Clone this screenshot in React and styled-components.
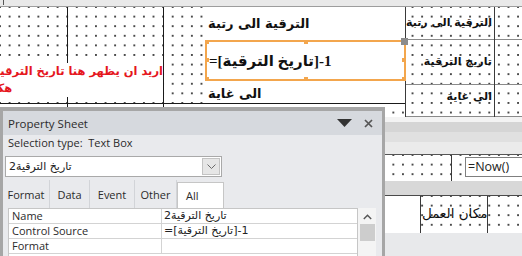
import React from "react";
import styled, { createGlobalStyle } from "styled-components";

const GlobalStyle = createGlobalStyle`
  html, body { margin: 0; padding: 0; }
  body {
    background: #ffffff;
    font-family: "Open Sans", "DejaVu Sans", sans-serif;
    overflow: hidden;
  }
`;

const dotGrid = `
  background-color: #ffffff;
  background-image: radial-gradient(circle, #4a4a4a 0.75px, transparent 1.05px);
  background-size: 9.6px 9.6px;
  background-position: -4.8px -4.8px;
`;

const Screen = styled.div`
  position: relative;
  width: 522px;
  height: 256px;
  overflow: hidden;
  display: flex;
  flex-direction: column;
  background: #e8e9eb;
`;

const Ruler = styled.div`
  flex: 0 0 7px;
  box-sizing: border-box;
  background: #e9e9e9;
  border-bottom: 1px solid #9d9d9d;
  padding-left: 3px;

  &::before {
    content: "";
    display: block;
    width: 1px;
    height: 5px;
    background: #555;
  }
`;

const Detail = styled.div`
  flex: 0 0 110px;
  display: flex;
  ${dotGrid}
`;

const Column = styled.div`
  position: relative;
  flex: ${(p) => (p.$w ? `0 0 ${p.$w}px` : "1 1 auto")};
  box-sizing: border-box;
  display: flex;
  flex-direction: column;
  border-left: ${(p) => (p.$lead ? "1px solid #3a3a3a" : "none")};
  border-right: ${(p) => (p.$edge ? `1px solid ${p.$edge}` : "none")};
`;

const LeftCell = styled.div`
  position: relative;
  height: 97px;
  box-sizing: border-box;
  border-bottom: 1px solid #1a1a1a;
`;

const Note = styled.div`
  position: relative;
  z-index: 2;
  margin: 56px 0 0 -81px;
  width: 176px;
  background: #ffffff;
  color: #e5161d;
  font: bold 11.5px/17px "DejaVu Sans", sans-serif;
  direction: rtl;
`;

const NoteLine = styled.div`
  white-space: nowrap;
  text-align: ${(p) => (p.$tail ? "left" : "right")};
`;

const FieldLabel = styled.div`
  height: ${(p) => p.$h}px;
  box-sizing: border-box;
  background: #ffffff;
  padding: ${(p) => (p.$low ? "5px" : "0")} 0 0 3px;
  display: flex;
  align-items: ${(p) => (p.$low ? "flex-start" : "center")};
  border-bottom: ${(p) => (p.$low ? "1px solid #1a1a1a" : "none")};
  font: bold 13px/16px "DejaVu Sans", sans-serif;
  color: #111;
`;

const TextBox = styled.div`
  position: relative;
  z-index: 3;
  height: 41px;
  margin-right: -1px;
  box-sizing: border-box;
  border: 2px solid #f3a64d;
  background: #ffffff;
  display: flex;
  align-items: center;
  padding-left: 2px;
`;

const BoxText = styled.span`
  font: bold 15px/20px "Liberation Serif", "DejaVu Sans", serif;
  color: #111;
  white-space: nowrap;
`;

const Grip = styled.span`
  position: absolute;
  left: ${(p) => p.$x}px;
  top: ${(p) => p.$y}px;
  width: 4px;
  height: 4px;
  background: #f3a64d;
`;

const MoveHandle = styled.span`
  position: absolute;
  top: -4px;
  right: ${(p) => p.$r}px;
  width: 7px;
  height: 7px;
  background: #8c8c8c;
  z-index: 4;
`;

const SideLabel = styled.div`
  position: relative;
  height: ${(p) => p.$h}px;
  box-sizing: border-box;
  border-bottom: 1px solid #8a8a8a;
  padding: ${(p) => (p.$low ? "5px" : "0")} 2px 0 0;
  display: flex;
  align-items: ${(p) => (p.$low ? "flex-start" : "center")};
  justify-content: flex-end;
  font: bold 11px/14px "DejaVu Sans", sans-serif;
  color: #111;
  white-space: nowrap;
`;

const RowLine = styled.div`
  position: relative;
  height: ${(p) => p.$h}px;
  box-sizing: border-box;
  border-bottom: 1px solid #8a8a8a;
`;

const SectionBar = styled.div`
  flex: 0 0 ${(p) => p.$h}px;
  box-sizing: border-box;
  background: ${(p) => p.$tone};
  border-bottom: ${(p) => (p.$line ? `1px solid ${p.$line}` : "none")};
`;

const FormRow = styled.div`
  flex: 0 0 ${(p) => p.$h}px;
  display: flex;
  ${dotGrid}
`;

const Span = styled.div`
  flex: ${(p) => (p.$w ? `0 0 ${p.$w}px` : "1 1 auto")};
  box-sizing: border-box;
  background: ${(p) => (p.$blank ? "#ffffff" : "transparent")};
  border-left: ${(p) => (p.$lead ? "1px solid #3a3a3a" : "none")};
  border-right: ${(p) => (p.$edge ? "1px solid #3a3a3a" : "none")};
`;

const NowBox = styled.div`
  flex: 1 1 auto;
  margin-top: 2px;
  height: 20px;
  box-sizing: border-box;
  border: 1px solid #7f7f7f;
  border-right: none;
  background: #ffffff;
  padding-left: 2px;
  font: 12.5px/18px "Open Sans", sans-serif;
  color: #222;
`;

const PlaceLabel = styled.div`
  flex: 0 0 32px;
  box-sizing: border-box;
  border-left: 1px solid #3a3a3a;
  border-right: 1px solid #3a3a3a;
  padding: 9px 0 0 1px;
  white-space: nowrap;
  font: 13.5px/16px "DejaVu Sans", sans-serif;
  color: #111;
  overflow: visible;
`;

const OffCanvas = styled.div`
  flex: 1 1 auto;
  background: #e8e9eb;
`;

/* property sheet window floating over the form */
const Sheet = styled.div`
  position: absolute;
  left: 0;
  top: 107px;
  width: 385px;
  height: 160px;
  box-sizing: border-box;
  border: 3px solid #a6a6a6;
  border-top-width: 4px;
  background: #e9eaed;
  z-index: 10;
  color: #2b2b2b;
  font-family: "Open Sans", sans-serif;
`;

const TitleBar = styled.div`
  height: 24px;
  display: flex;
  align-items: center;
  justify-content: space-between;
  padding: 0 9px 0 5px;
  background: #d6d9de;
  font-size: 11.5px;
`;

const TitleTools = styled.div`
  display: flex;
  align-items: center;
  gap: 12px;
`;

const SelectionRow = styled.div`
  height: 21px;
  padding-left: 5px;
  font-size: 11px;
  line-height: 15px;
  white-space: pre;
`;

const Combo = styled.div`
  margin-left: 2px;
  width: 217px;
  height: 21px;
  box-sizing: border-box;
  border: 1px solid #a9a9a9;
  background: #ffffff;
  display: flex;
`;

const ComboText = styled.div`
  flex: 1 1 auto;
  padding-left: 3px;
  font: 11px/19px "DejaVu Sans", sans-serif;
  color: #222;
`;

const ComboButton = styled.div`
  flex: 0 0 18px;
  margin: 1px;
  box-sizing: border-box;
  border: 1px solid #c3c3c3;
  background: #e6e6e6;
  display: flex;
  align-items: center;
  justify-content: center;
`;

const Tabs = styled.div`
  margin-top: 3px;
  height: 28px;
  display: flex;
  align-items: flex-end;
`;

const Tab = styled.div`
  flex: 0 0 ${(p) => p.$w}px;
  height: ${(p) => (p.$active ? 26 : 28)}px;
  box-sizing: border-box;
  display: flex;
  align-items: center;
  justify-content: ${(p) => (p.$active ? "flex-start" : "center")};
  padding-left: ${(p) => (p.$active ? "8px" : "0")};
  font-size: 11px;
  background: ${(p) => (p.$active ? "#ffffff" : "transparent")};
  border: ${(p) => (p.$active ? "1px solid #c6c6c6" : "none")};
  border-bottom: none;
  border-right: 1px solid ${(p) => (p.$active ? "#c6c6c6" : "#d2d4d8")};
`;

const PropArea = styled.div`
  display: flex;
  padding-left: 5px;
`;

const PropGrid = styled.div`
  flex: 0 0 350px;
  box-sizing: border-box;
  border: 1px solid #c6c6c6;
  border-bottom: none;
  background: #ffffff;
  height: 60px;
`;

const PropRow = styled.div`
  height: 15px;
  box-sizing: border-box;
  display: grid;
  grid-template-columns: 153px 1fr;
  border-bottom: 1px solid #d3d3d3;
`;

const PropName = styled.div`
  padding-left: 3px;
  border-right: 1px solid #d3d3d3;
  font-size: 11px;
  line-height: 14px;
  white-space: nowrap;
`;

const PropValue = styled.div`
  padding-left: 2px;
  font: 11px/14px "DejaVu Sans", sans-serif;
  color: #222;
  white-space: nowrap;
  overflow: hidden;
`;

const ScrollBar = styled.div`
  flex: 0 0 18px;
  height: 60px;
  background: #f4f4f4;
  display: flex;
  flex-direction: column;
  align-items: center;
`;

const ScrollThumb = styled.div`
  margin-top: 4px;
  width: 15px;
  height: 17px;
  background: #cdcdcd;
`;

const grips = [
  [-2, -2],
  [97, -2],
  [-2, 16],
  [-2, 35],
  [97, 35],
  [195, 35],
  [195, 16],
];

export default function App() {
  return (
    <>
      <GlobalStyle />
      <Screen>
        <Ruler />
        <Detail>
          <Column $w={68} $edge="#1a1a1a">
            <LeftCell />
          </Column>
          <Column $w={96} $edge="#1a1a1a">
            <LeftCell>
              <Note>
                <NoteLine>اريد ان يظهر هنا تاريخ الترقية اللاحق</NoteLine>
                <NoteLine $tail>هكذا</NoteLine>
              </Note>
            </LeftCell>
          </Column>
          <Column $w={41}>
            <LeftCell />
          </Column>
          <Column $w={200}>
            <FieldLabel $h={33}>الترقية الى رتبة</FieldLabel>
            <TextBox>
              <BoxText>=[تاريخ الترقية]-1</BoxText>
              {grips.map(([x, y]) => (
                <Grip key={`${x}-${y}`} $x={x} $y={y} />
              ))}
              <MoveHandle $r={-4} />
            </TextBox>
            <FieldLabel $h={23} $low>
              الى غاية
            </FieldLabel>
          </Column>
          <Column $w={47} $lead $edge="#3a3a3a">
            <SideLabel $h={33}>الترقية الى رتبة</SideLabel>
            <SideLabel $h={45}>تاريخ الترقية</SideLabel>
            <SideLabel $h={32} $low>
              الى غاية
            </SideLabel>
          </Column>
          <Column $w={66} $edge="#3a3a3a">
            <RowLine $h={33} />
            <RowLine $h={45}>
              <MoveHandle $r={-4} />
            </RowLine>
            <RowLine $h={32} />
          </Column>
          <Column>
            <RowLine $h={33} />
            <RowLine $h={45} />
            <RowLine $h={32} />
          </Column>
        </Detail>

        <SectionBar $h={5} $tone="#f3f3f3" />
        <SectionBar $h={10} $tone="#d5d5d5" />
        <SectionBar $h={10} $tone="#e0e0e0" />
        <SectionBar $h={13} $tone="#ebebeb" $line="#555555" />

        <FormRow $h={26}>
          <Span $w={452} $edge />
          <Span $w={13} />
          <NowBox>=Now()</NowBox>
        </FormRow>

        <SectionBar $h={15} $tone="#d8d8d8" $line="#4a4a4a" />

        <FormRow $h={37}>
          <Span $w={420} $blank />
          <PlaceLabel>مكان العمل</PlaceLabel>
          <Span $w={66} $edge />
          <Span />
        </FormRow>

        <OffCanvas />

        <Sheet>
          <TitleBar>
            <span>Property Sheet</span>
            <TitleTools>
              <svg width="15" height="8" viewBox="0 0 15 8">
                <polygon points="0,0 15,0 7.5,8" fill="#333" />
              </svg>
              <svg width="9" height="9" viewBox="0 0 9 9">
                <path d="M1 1 L8 8 M8 1 L1 8" stroke="#555" strokeWidth="1.7" />
              </svg>
            </TitleTools>
          </TitleBar>
          <SelectionRow>{"Selection type:  Text Box"}</SelectionRow>
          <Combo>
            <ComboText>تاريخ الترقية2</ComboText>
            <ComboButton>
              <svg width="9" height="5" viewBox="0 0 9 5">
                <path d="M0.5 0.5 L4.5 4.5 L8.5 0.5" stroke="#6b6b6b" fill="none" strokeWidth="1" />
              </svg>
            </ComboButton>
          </Combo>
          <Tabs>
            <Tab $w={47}>Format</Tab>
            <Tab $w={40}>Data</Tab>
            <Tab $w={45}>Event</Tab>
            <Tab $w={42}>Other</Tab>
            <Tab $w={47} $active>
              All
            </Tab>
          </Tabs>
          <PropArea>
            <PropGrid>
              <PropRow>
                <PropName>Name</PropName>
                <PropValue>تاريخ الترقية2</PropValue>
              </PropRow>
              <PropRow>
                <PropName>Control Source</PropName>
                <PropValue>=[تاريخ الترقية]-1</PropValue>
              </PropRow>
              <PropRow>
                <PropName>Format</PropName>
                <PropValue />
              </PropRow>
            </PropGrid>
            <ScrollBar>
              <svg width="9" height="6" viewBox="0 0 9 6" style={{ marginTop: 6 }}>
                <path d="M0.8 5 L4.5 1.2 L8.2 5" stroke="#555" fill="none" strokeWidth="1.4" />
              </svg>
              <ScrollThumb />
            </ScrollBar>
          </PropArea>
        </Sheet>
      </Screen>
    </>
  );
}
